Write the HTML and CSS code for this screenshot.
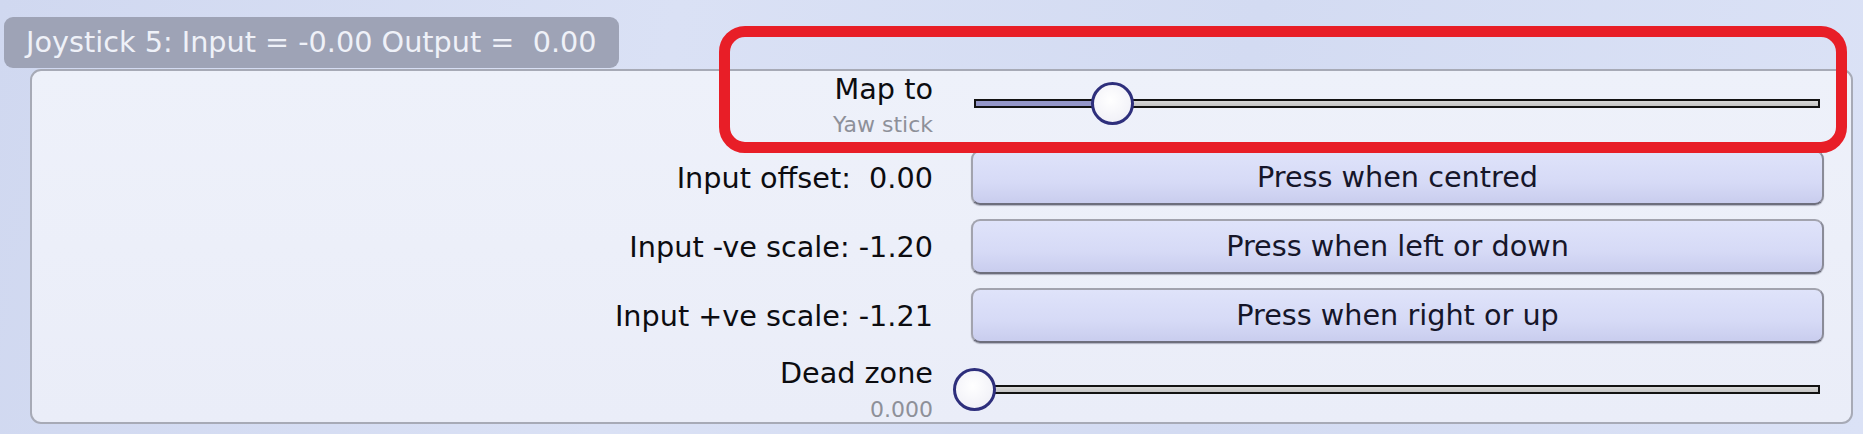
FILE: index.html
```html
<!DOCTYPE html>
<html>
<head>
<meta charset="utf-8">
<link rel="stylesheet" href="styles.css">
</head>
<body>
<div class="page">
  <div class="tab">Joystick 5: Input = -0.00 Output =&nbsp; 0.00</div>
  <div class="panel">
    <div class="label-block top">
      <div class="label">Map to</div>
      <div class="sub">Yaw stick</div>
    </div>
    <div class="control">
      <div class="slider">
        <div class="track"><div class="fill" style="width:16.4%"></div></div>
        <div class="knob" style="left:16.4%"></div>
      </div>
    </div>

    <div class="label-block center"><div class="label">Input offset:&nbsp; 0.00</div></div>
    <div class="control"><button class="btn">Press when centred</button></div>

    <div class="label-block center"><div class="label">Input -ve scale: -1.20</div></div>
    <div class="control"><button class="btn">Press when left or down</button></div>

    <div class="label-block center"><div class="label">Input +ve scale: -1.21</div></div>
    <div class="control"><button class="btn">Press when right or up</button></div>

    <div class="label-block">
      <div class="label">Dead zone</div>
      <div class="sub sub-low">0.000</div>
    </div>
    <div class="control">
      <div class="slider">
        <div class="track"><div class="fill" style="width:0%"></div></div>
        <div class="knob" style="left:0%"></div>
      </div>
    </div>
  </div>
  <div class="highlight"></div>
</div>
</body>
</html>
```
FILE: styles.css
```css
html, body {
  margin: 0;
  padding: 0;
}
body {
  width: 1863px;
  height: 434px;
  overflow: hidden;
  background: linear-gradient(100deg, #d0d8f0 0%, #dae1f5 35%, #d3dbf2 65%, #dbe2f6 100%);
  font-family: "DejaVu Sans", sans-serif;
}
.page {
  position: relative;
  padding-top: 17px;
}
.tab {
  margin-left: 4px;
  width: 615px;
  height: 51px;
  box-sizing: border-box;
  padding-left: 22px;
  background: #9ea3b6;
  border-radius: 9px;
  color: #eff1f8;
  font-size: 28.7px;
  line-height: 51px;
  white-space: nowrap;
}
.panel {
  margin-top: 1px;
  margin-left: 30px;
  width: 1823px;
  height: 355px;
  box-sizing: border-box;
  border: 2px solid #a7aab6;
  border-radius: 11px;
  background: linear-gradient(180deg, #eef1fa 0%, #eaedf8 100%);
  padding: 0 27px 0 0;
  display: grid;
  grid-template-columns: 901px 853px;
  column-gap: 38px;
  grid-template-rows: 65px 55px 55px 55px 64px;
  row-gap: 14px;
  align-content: start;
}
.label-block {
  display: flex;
  flex-direction: column;
  align-items: flex-end;
  color: #0c0c10;
}
.label-block.top {
  padding-top: 2px;
}
.label-block.center {
  justify-content: center;
}
.label {
  font-size: 28.7px;
  line-height: 32px;
  white-space: nowrap;
}
.sub {
  font-size: 22px;
  line-height: 26px;
  margin-top: 7px;
  color: #8e9099;
}
.sub.sub-low {
  margin-top: 8px;
}
.control {
  display: flex;
  align-items: center;
}
.slider {
  position: relative;
  flex: 1;
  margin: 0 4px 0 3px;
  height: 43px;
  display: flex;
  align-items: center;
}
.track {
  flex: 1;
  height: 9px;
  box-sizing: border-box;
  border: 2px solid #121212;
  background: linear-gradient(180deg, #d8d8d8 0%, #c4c4c4 100%);
  overflow: hidden;
}
.fill {
  height: 100%;
  background: #9497c9;
}
.knob {
  position: absolute;
  top: 0;
  width: 43px;
  height: 43px;
  margin-left: -21.5px;
  box-sizing: border-box;
  border: 3px solid #2e2f7c;
  border-radius: 50%;
  background: radial-gradient(circle at 45% 40%, #ffffff 0%, #f2f2f8 70%, #e6e6f0 100%);
}
.btn {
  width: 100%;
  height: 55px;
  box-sizing: border-box;
  border: 2px solid #a2a3ae;
  border-bottom-color: #6d6e7c;
  border-right-color: #8a8b98;
  border-radius: 9px;
  background: linear-gradient(180deg, #dfe3fa 0%, #d6daf6 60%, #c9cdee 100%);
  box-shadow: 0 1px 1px rgba(60, 60, 80, 0.35);
  font-family: "DejaVu Sans", sans-serif;
  font-size: 28.7px;
  color: #16162a;
  padding: 0;
  line-height: 51px;
}
.highlight {
  position: absolute;
  left: 719px;
  top: 26px;
  width: 1128px;
  height: 127px;
  box-sizing: border-box;
  border: 11px solid #e81e27;
  border-radius: 26px;
}
```
